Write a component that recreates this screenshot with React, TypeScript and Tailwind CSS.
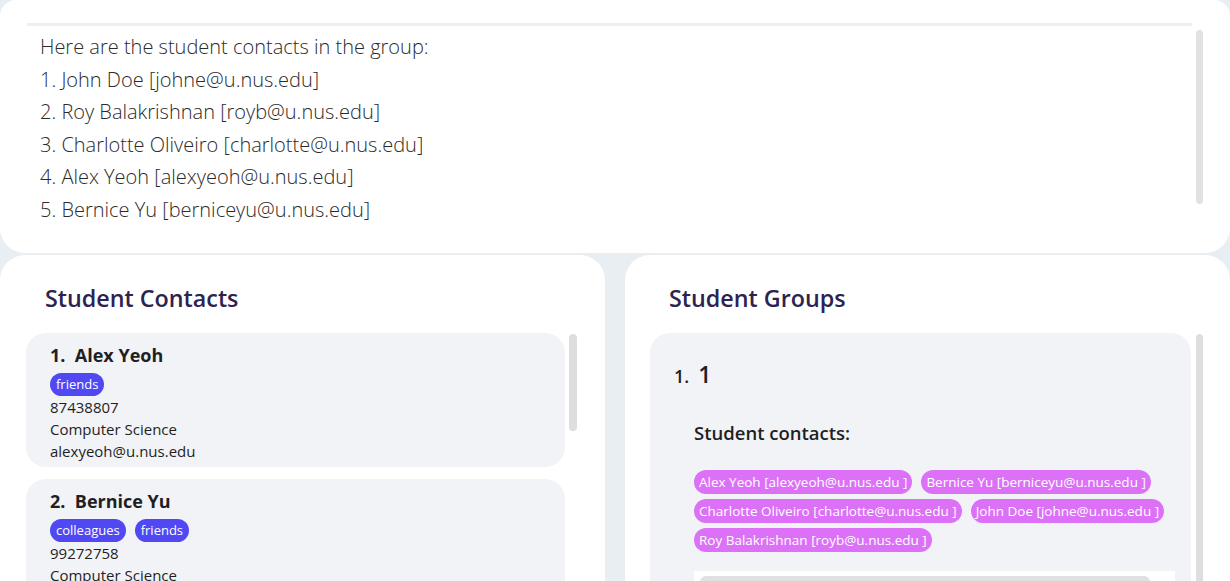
import React from "react";

// Contact card data
interface Contact {
  name: string;
  tags: string[];
  phone: string;
  major: string;
  email: string;
}

const contacts: Contact[] = [
  { name: "Alex Yeoh", tags: ["friends"], phone: "87438807", major: "Computer Science", email: "alexyeoh@u.nus.edu" },
  { name: "Bernice Yu", tags: ["colleagues", "friends"], phone: "99272758", major: "Computer Science", email: "berniceyu@u.nus.edu" },
];

const groupLines = [
  "Here are the student contacts in the group:",
  "1. John Doe [johne@u.nus.edu]",
  "2. Roy Balakrishnan [royb@u.nus.edu]",
  "3. Charlotte Oliveiro [charlotte@u.nus.edu]",
  "4. Alex Yeoh [alexyeoh@u.nus.edu]",
  "5. Bernice Yu [berniceyu@u.nus.edu]",
];

const groupMembers = [
  "Alex Yeoh [alexyeoh@u.nus.edu ]",
  "Bernice Yu [berniceyu@u.nus.edu ]",
  "Charlotte Oliveiro [charlotte@u.nus.edu ]",
  "John Doe [johne@u.nus.edu ]",
  "Roy Balakrishnan [royb@u.nus.edu ]",
];

const App: React.FC = () => {
  return (
    <div className="w-[1230px] h-[581px] overflow-hidden bg-[#e9eef2] flex flex-col font-['Open_Sans',sans-serif]">
      {/* Result display */}
      <div className="h-[253px] shrink-0 bg-white rounded-t-[16px] rounded-b-[25px] px-[27px] pt-[23px] flex">
        <div className="w-[1165px] h-[200px] border-t-[3px] border-[#efefef] pl-[13px] pt-[5px]">
          {groupLines.map((line) => (
            <div key={line} className="text-[20px] leading-[32.6px] font-light text-[#2b2b2b]">
              {line}
            </div>
          ))}
        </div>
        <div className="ml-[4px] mt-[7px] w-[7px] h-[174px] rounded-full bg-[#e2e2e2]" />
      </div>

      <div className="mt-[2px] flex-1 min-h-0 flex gap-[20px]">
        {/* Student contacts */}
        <div className="w-[605px] bg-white rounded-t-[25px] pt-[28px] flex flex-col">
          <h2 className="pl-[45px] text-[23.3px] leading-[30px] font-semibold text-[#2d2250]">Student Contacts</h2>
          <div className="mt-[20px] pl-[26px] flex">
            <div className="w-[539px] flex flex-col gap-[12px]">
              {contacts.map((c, i) => (
                <div key={c.name} className="bg-[#f1f3f7] rounded-[20px] pl-[24px] pt-[10px] pb-[5px] text-[#1f1f1f]">
                  <div className="text-[18px] leading-[24px] font-bold">
                    {i + 1}.&nbsp;&nbsp;{c.name}
                  </div>
                  <div className="mt-[6px] flex gap-[9px]">
                    {c.tags.map((t) => (
                      <span key={t} className="h-[23px] px-[6px] rounded-full bg-[#4f48f3] text-white text-[13px] leading-[23px]">
                        {t}
                      </span>
                    ))}
                  </div>
                  <div className="text-[15px] leading-[22px]">{c.phone}</div>
                  <div className="text-[15px] leading-[22px]">{c.major}</div>
                  <div className="text-[15px] leading-[22px]">{c.email}</div>
                </div>
              ))}
            </div>
            <div className="ml-[4px] mt-[1px] w-[8px] h-[97px] rounded-full bg-[#dedede]" />
          </div>
        </div>

        {/* Student groups */}
        <div className="w-[605px] bg-white rounded-t-[25px] pt-[28px] flex flex-col">
          <h2 className="pl-[44px] text-[23.3px] leading-[30px] font-semibold text-[#2d2250]">Student Groups</h2>
          <div className="mt-[20px] pl-[25px] flex flex-1 min-h-0">
            <div className="w-[541px] bg-[#f1f3f7] rounded-t-[20px] pl-[24px] pt-[24px] text-[#1f1f1f]">
              <div className="flex items-baseline h-[30px]">
                <span className="text-[18px] font-semibold">1.</span>
                <span className="ml-[9px] text-[23px] font-semibold">1</span>
              </div>
              <div className="pl-[20px]">
                <div className="mt-[33px] text-[18.5px] leading-[26px] font-semibold">Student contacts:</div>
                <div className="mt-[24px] w-[480px] flex flex-wrap gap-x-[9px] gap-y-[5px]">
                  {groupMembers.map((m) => (
                    <span key={m} className="h-[24px] px-[5px] rounded-full bg-[#dc71f7] text-white text-[13.5px] leading-[24px]">
                      {m}
                    </span>
                  ))}
                </div>
                <div className="mt-[19px] w-[481px] h-[20px] bg-white pl-[6px] pt-[5px]">
                  <div className="w-[450px] h-[20px] rounded-t-[6px] bg-[#e0e0e0]" />
                </div>
              </div>
            </div>
            <div className="ml-[5px] mt-[1px] w-[7px] h-[300px] rounded-full bg-[#dedede]" />
          </div>
        </div>
      </div>
    </div>
  );
};

export default App;
